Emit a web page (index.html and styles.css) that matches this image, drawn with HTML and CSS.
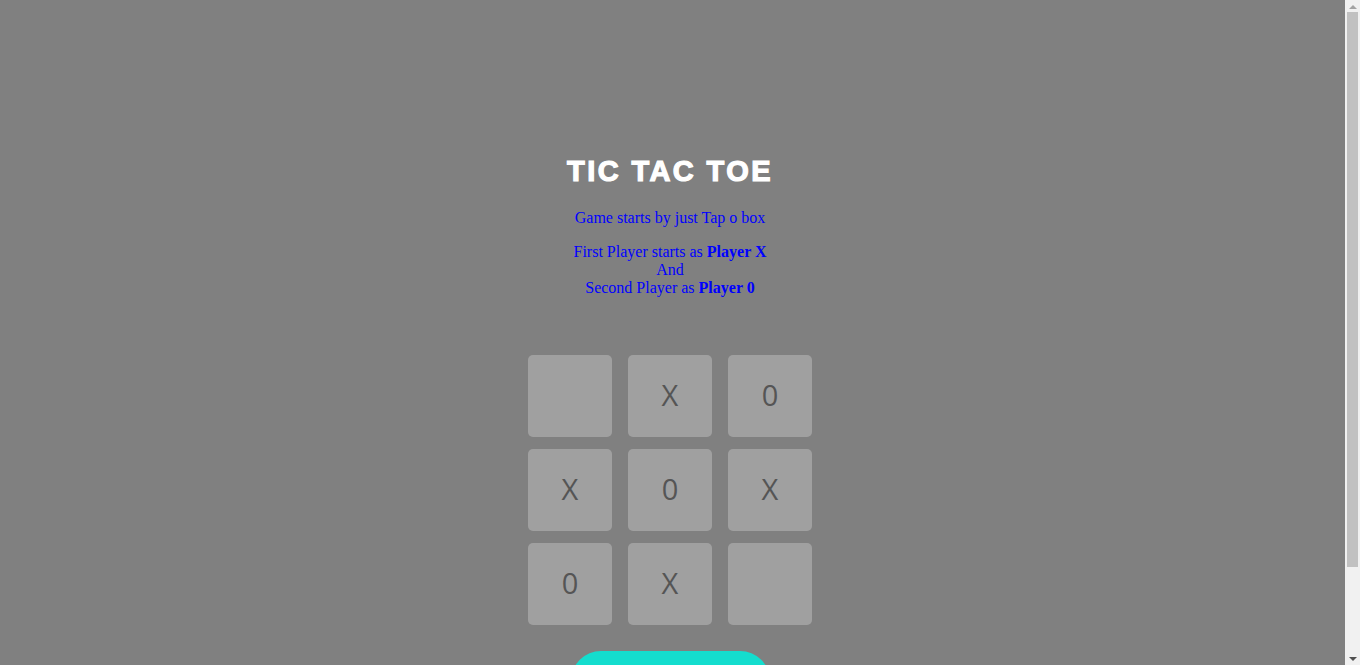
FILE: index.html
```html
<!DOCTYPE html>
<html>
<head>
<meta charset="utf-8">
<title>Tic Tac Toe</title>
<link rel="stylesheet" href="styles.css">
</head>
<body>
<div class="page">
  <h1 class="title">TIC TAC TOE</h1>
  <p class="info">Game starts by just Tap o box</p>
  <p class="info">First Player starts as <b>Player X</b><br>And<br>Second Player as <b>Player 0</b></p>
  <div class="board">
    <div class="cell"></div>
    <div class="cell">X</div>
    <div class="cell">0</div>
    <div class="cell">X</div>
    <div class="cell">0</div>
    <div class="cell">X</div>
    <div class="cell">0</div>
    <div class="cell">X</div>
    <div class="cell"></div>
  </div>
  <button class="reset">Reset</button>
</div>
<div class="fake-scroll" aria-hidden="true">
  <span class="arrow arrow-up"></span>
  <span class="thumb"></span>
  <span class="arrow arrow-down"></span>
</div>
</body>
</html>
```
FILE: styles.css
```css
html, body {
  margin: 0;
  padding: 0;
}
body {
  background: #808080;
  font-family: "Liberation Serif", "Times New Roman", serif;
  font-size: 16px;
}
.page {
  display: flex;
  flex-direction: column;
  align-items: center;
  padding: 154px 20px 70px 0;
}
.title {
  margin: 0 0 20px;
  font-family: "Liberation Sans", Arial, sans-serif;
  font-weight: bold;
  font-size: 29px;
  line-height: 35px;
  letter-spacing: 2.4px;
  -webkit-text-stroke: 1.2px #ffffff;
  color: #ffffff;
}
.info {
  margin: 0 0 16px;
  color: #0000ff;
  text-align: center;
}
.board {
  margin-top: 42px;
  display: grid;
  grid-template-columns: repeat(3, 84px);
  grid-auto-rows: 82px;
  column-gap: 16px;
  row-gap: 12px;
}
.cell {
  background: #a0a0a0;
  border-radius: 5px;
  display: flex;
  align-items: center;
  justify-content: center;
  padding-bottom: 3px;
  box-sizing: border-box;
  font-family: "Open Sans", sans-serif;
  font-size: 29px;
  color: #555555;
}
.reset {
  margin-top: 26px;
  width: 199px;
  height: 60px;
  border: none;
  border-radius: 30px;
  background: #14ddce;
  color: #ffffff;
  font-size: 20px;
}
.fake-scroll {
  position: fixed;
  top: 0;
  right: 0;
  bottom: 0;
  width: 15px;
  background: #f1f1f1;
  display: flex;
  flex-direction: column;
  align-items: center;
}
.arrow {
  width: 0;
  height: 0;
  border-left: 4px solid transparent;
  border-right: 4px solid transparent;
}
.arrow-up {
  margin-top: 5px;
  border-bottom: 4px solid #a3a3a3;
}
.arrow-down {
  margin-bottom: 4px;
  border-top: 4px solid #505050;
}
.thumb {
  width: 11px;
  margin: 3px 0 0;
  height: 555px;
  background: #c1c1c1;
  flex: none;
}
.thumb + .arrow-down {
  margin-top: auto;
}
```
